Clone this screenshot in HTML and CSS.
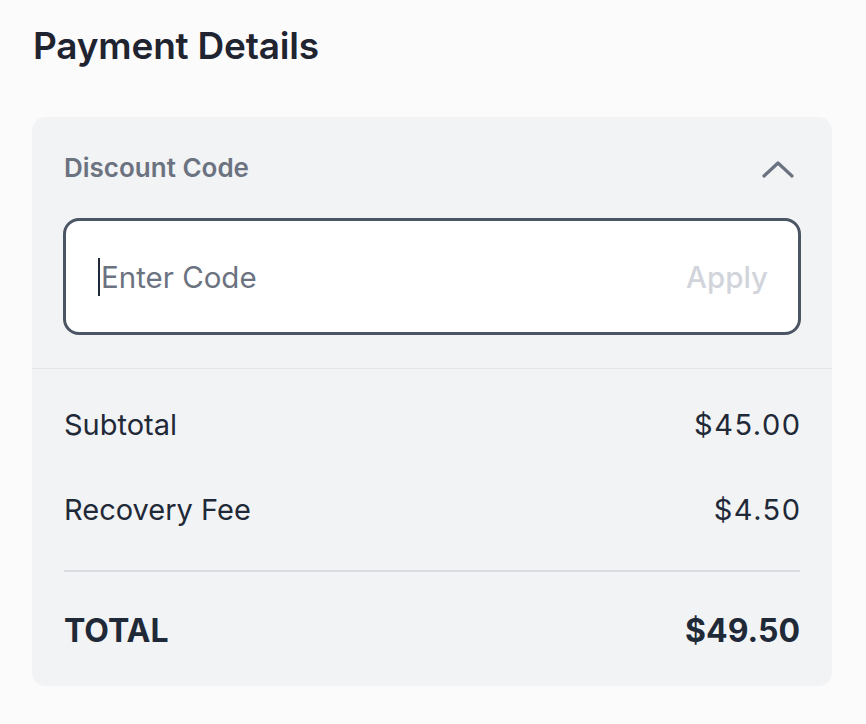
FILE: index.html
```html
<!DOCTYPE html>
<html lang="en">
<head>
<meta charset="utf-8">
<title>Payment Details</title>
<link rel="stylesheet" href="styles.css">
</head>
<body>
<main class="page">
  <h1 class="title">Payment Details</h1>
  <section class="card">
    <div class="discount">
      <div class="discount-head">
        <span class="discount-label">Discount Code</span>
        <svg class="chevron" width="34" height="20" viewBox="0 0 34 20" aria-hidden="true">
          <polyline points="3,17 17,4 31,17" fill="none" stroke="#6b7280" stroke-width="3.2" stroke-linecap="round" stroke-linejoin="round"/>
        </svg>
      </div>
      <div class="code-input">
        <span class="caret"></span>
        <span class="placeholder">Enter Code</span>
        <span class="apply">Apply</span>
      </div>
    </div>
    <div class="summary">
      <div class="row"><span>Subtotal</span><span class="amount">$45.00</span></div>
      <div class="row row-second"><span>Recovery Fee</span><span class="amount">$4.50</span></div>
      <div class="rule"></div>
      <div class="row row-total"><span>TOTAL</span><span>$49.50</span></div>
    </div>
  </section>
</main>
</body>
</html>
```

FILE: styles.css
```css
* { box-sizing: border-box; }
html, body { margin: 0; padding: 0; }
body {
  background: #fbfbfc;
  font-family: Inter, "Noto Sans", sans-serif;
  color: #1f2937;
}
.page {
  padding: 22px 34px 0 32px;
}
.title {
  margin: 0 0 0 1px;
  font-size: 37px;
  line-height: 48px;
  font-weight: 600;
  color: #1f2430;
  letter-spacing: -0.2px;
}
.card {
  margin-top: 47px;
  width: 800px;
  height: 569px;
  background: #f2f3f5;
  border-radius: 14px;
  overflow: hidden;
}
.discount {
  padding: 25px 31px 33px 31px;
  border-bottom: 1px solid #e3e5e8;
}
.discount-head {
  height: 50px;
  display: flex;
  align-items: center;
  justify-content: space-between;
  padding-left: 1px;
  padding-right: 6px;
}
.discount-label {
  font-size: 26px;
  font-weight: 600;
  color: #6b7280;
}
.chevron { display: block; margin-top: 4px; }
.code-input {
  margin-top: 26px;
  height: 117px;
  background: #ffffff;
  border: 3px solid #4b5563;
  border-radius: 16px;
  display: flex;
  align-items: center;
  padding: 0 30px 0 32px;
}
.caret {
  width: 2px;
  height: 38px;
  background: #1f2937;
  margin-right: 1px;
}
.placeholder {
  font-size: 29.5px;
  color: #6b7280;
  flex: 1;
}
.apply {
  font-size: 29.5px;
  font-weight: 500;
  color: #d1d5db;
}
.summary {
  padding: 35px 32px 0 32px;
}
.row {
  height: 40px;
  display: flex;
  align-items: center;
  justify-content: space-between;
  font-size: 29px;
  color: #1f2937;
}
.amount { letter-spacing: 1.5px; margin-right: -1.5px; }
.row-second { margin-top: 45px; }
.rule {
  margin-top: 41px;
  height: 2px;
  background: #d8dbe0;
}
.row-total {
  margin-top: 36px;
  height: 44px;
  font-size: 32px;
  font-weight: 700;
}
```
